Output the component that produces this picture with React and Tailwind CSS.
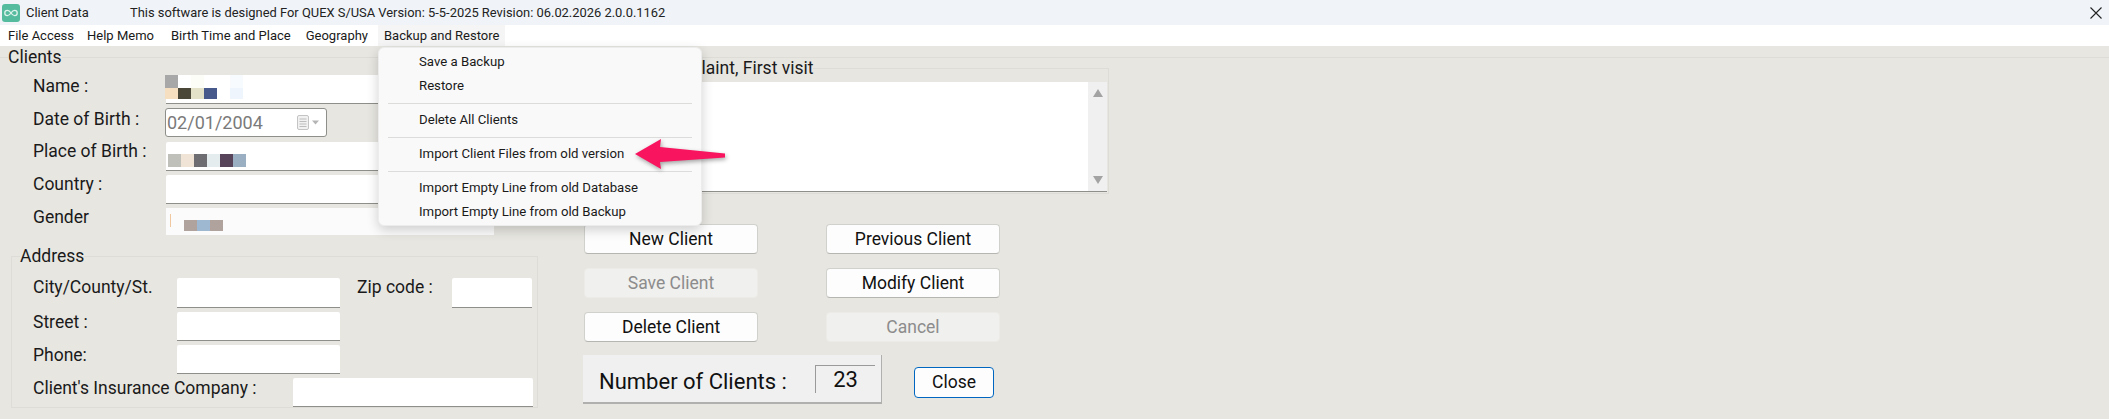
const Blocks = ({ colors, className = "" }) => (
  <div className={`flex ${className}`}>
    {colors.map((c, i) => (
      <div key={i} className="w-[13px] h-full" style={{ background: c }} />
    ))}
  </div>
);

const Input = ({ className = "", children }) => (
  <div className={`bg-white border-b border-[#8e8e8a] rounded-t-[2px] ${className}`}>{children}</div>
);

const Row = ({ label, children, mb = "mb-[4px]", lift = "-mt-[8px]" }) => (
  <div className={`flex items-center h-[29px] ${mb}`}>
    <span className={`w-[133px] text-[17.5px] leading-[22px] text-[#1a1a1a] ${lift}`}>{label}</span>
    {children}
  </div>
);

const Btn = ({ children, disabled }) => (
  <button
    className={
      disabled
        ? "w-[174px] h-[30px] rounded-[4px] bg-[#f0f0ee] text-[#8c8c8c] text-[17.5px] leading-[26px] border border-[#ecebe7]"
        : "w-[174px] h-[30px] rounded-[4px] bg-[#fdfdfd] text-[#111] text-[17.5px] leading-[26px] border border-[#d0d0cc] border-b-[#b5b5b1]"
    }
  >
    {children}
  </button>
);

const AddrInput = ({ w, h = "h-[29px]" }) => <Input className={`${h} ${w}`} />;

const Lbl = ({ w, className = "-mt-[10px]", children }) => (
  <span className={`${w} text-[17.5px] leading-[22px] text-[#1a1a1a] ${className}`}>{children}</span>
);

const MenuItem = ({ children }) => (
  <div className="h-[24px] pl-[40px] flex items-center text-[13.2px] text-[#1a1a1a] whitespace-nowrap">{children}</div>
);
const Sep = () => <div className="mx-[9px] my-[4.5px] h-px bg-[#dcdcda]" />;

export default function App() {
  return (
    <div
      className="relative w-[2109px] h-[419px] overflow-hidden bg-[#e7e6e1] text-[#111]"
      style={{ fontFamily: "Roboto, 'Noto Sans', sans-serif" }}
    >
      {/* Title bar */}
      <div className="h-[25px] flex items-center bg-[#f0f4f9]">
        <svg width="18" height="18" viewBox="0 0 18 18" className="ml-[2px]">
          <rect width="18" height="18" rx="3" fill="#55bb9f" />
          <path
            d="M9 9c-1.2-1.8-2.3-2.6-3.6-2.6a2.6 2.6 0 0 0 0 5.2C6.700 11.600 7.800 10.800 9 9c1.200-1.800 2.300-2.600 3.600-2.600a2.600 2.600 0 0 1 0 5.200C11.300 11.600 10.200 10.800 9 9z"
            fill="none"
            stroke="#dff3ec"
            strokeWidth="1.300"
          />
        </svg>
        <span className="ml-[6px] w-[104px] text-[12.9px] text-[#222]">Client Data</span>
        <span className="text-[12.9px] text-[#222] whitespace-nowrap">
          This software is designed For QUEX S/USA Version: 5-5-2025 Revision: 06.02.2026 2.0.0.1162
        </span>
        <svg width="14" height="14" viewBox="0 0 14 14" className="ml-auto mr-[6px]">
          <path d="M1.500 1.500l11 11M12.500 1.500l-11 11" stroke="#222" strokeWidth="1.100" fill="none" />
        </svg>
      </div>

      {/* Menu bar */}
      <div className="h-[21px] bg-white flex items-center text-[13px] text-[#1a1a1a] pl-[2px]">
        <span className="px-[6px] mr-[1px]">File Access</span>
        <span className="px-[6px] mr-[5px]">Help Memo</span>
        <span className="px-[6px] mr-[3px]">Birth Time and Place</span>
        <span className="px-[6px] mr-[4px]">Geography</span>
        <span className="px-[6px] h-full flex items-center bg-[#f5f5f5]">Backup and Restore</span>
      </div>

      {/* Clients group */}
      <fieldset className="border-t border-[#dddcd7]">
        <legend className="ml-[8px] text-[17.5px] leading-[22px] text-[#1a1a1a]">Clients</legend>
        <div className="flex">
          {/* Left column */}
          <div className="w-[570px] shrink-0 pt-[7px]">
            <div className="pl-[33px]">
              <Row label="Name :">
                <Input className="w-[328px] h-[29px] relative">
                  <Blocks colors={["#a8a8a8", "#ffffff", "#fdfdf8", "#ffffff", "#ffffff", "#f8fbfe"]} className="h-[13px] -ml-[1px]" />
                  <Blocks colors={["#f5dfc0", "#4a4638", "#e3e2c8", "#46598a", "#ffffff", "#eef5fc"]} className="h-[11px] -ml-[1px]" />
                </Input>
              </Row>
              <Row label="Date of Birth :" mb="mb-[5px]">
                <div className="w-[162px] h-[29px] -ml-[1px] bg-white border border-[#8e8e8a] rounded-[3px] flex items-center pl-[1px]">
                  <span className="text-[18px] text-[#7a7a7a]">02/01/2004</span>
                  <svg width="24" height="15" viewBox="0 0 24 15" className="ml-[34px]">
                    <rect x="0.500" y="0.500" width="11" height="14" rx="1.500" fill="#f1f1f1" stroke="#c4c4c4" />
                    <path d="M2.500 4h7M2.500 6.500h7M2.500 9h7M2.500 11.500h7" stroke="#bdbdbd" strokeWidth="1" />
                    <path d="M15 5.500h7l-3.500 4z" fill="#b5b5b5" />
                  </svg>
                </div>
              </Row>
              <Row label="Place of Birth :" lift="-mt-[11px]">
                <Input className="w-[328px] h-[29px] pt-[12px] pl-[2px]">
                  <Blocks colors={["#c0c0bb", "#f0e4d6", "#6e6e72", "#e4ecee", "#57445a", "#9ab0c2"]} className="h-[13px]" />
                </Input>
              </Row>
              <Row label="Country :" lift="-mt-[11px]">
                <Input className="w-[328px] h-[29px]" />
              </Row>
              <Row label="Gender" lift="-mt-[11px]" mb="mb-0">
                <div className="w-[328px] h-[27px] bg-[#fbfbfb] relative pt-[12px] pl-[18px] self-start">
                  <Blocks colors={["#b0a29c", "#9fb8d2", "#b0a29c"]} className="h-[11px]" />
                  <div className="absolute left-[4px] top-[6px] w-px h-[13px] bg-[#f0c8a0]" />
                </div>
              </Row>
            </div>

            {/* Address group */}
            <fieldset className="ml-[11px] w-[527px] h-[163px] mt-[8px] border border-[#dddcd7]">
              <legend className="ml-[8px] text-[17.5px] leading-[22px] text-[#1a1a1a]">Address</legend>
              <div className="pl-[21px] pt-[11px]">
                <div className="flex items-center mb-[4px]">
                  <Lbl w="w-[144px]" className="-mt-[12px]">City/County/St.</Lbl>
                  <AddrInput w="w-[163px]" h="h-[30px]" />
                  <Lbl w="w-[95px]" className="ml-[17px] -mt-[12px]">Zip code :</Lbl>
                  <AddrInput w="w-[80px]" h="h-[30px]" />
                </div>
                <div className="flex items-center mb-[4px]">
                  <Lbl w="w-[144px]">Street :</Lbl>
                  <AddrInput w="w-[163px]" />
                </div>
                <div className="flex items-center mb-[4px]">
                  <Lbl w="w-[144px]">Phone:</Lbl>
                  <AddrInput w="w-[163px]" />
                </div>
                <div className="flex items-center">
                  <Lbl w="w-[260px]">Client's Insurance Company :</Lbl>
                  <AddrInput w="w-[240px]" />
                </div>
              </div>
            </fieldset>
          </div>

          {/* Right column */}
          <div className="w-[539px] shrink-0">
            <fieldset className="w-[539px] h-[137px] border border-[#dddcd7] -mt-[11px]">
              <legend className="ml-[39px] text-[17.5px] leading-[22px] text-[#1a1a1a]">Chief Complaint, First visit</legend>
              <div className="ml-[2px] mr-[1px] h-[110px] mt-[3px] bg-white border-b border-[#8e8e8a] flex justify-end">
                <div className="w-[19px] h-full bg-[#f0f0f0] flex flex-col items-center justify-between py-[7px]">
                  <svg width="10" height="8" viewBox="0 0 10 8"><path d="M5 0l5 8H0z" fill="#a3a3a3" /></svg>
                  <svg width="10" height="8" viewBox="0 0 10 8"><path d="M5 8L0 0h10z" fill="#a3a3a3" /></svg>
                </div>
              </div>
            </fieldset>

            <div className="pl-[14px] pt-[30px]">
              <div className="grid grid-cols-[174px_173px] gap-x-[68px] gap-y-[14px]">
                <Btn>New Client</Btn>
                <Btn>Previous Client</Btn>
                <Btn disabled>Save Client</Btn>
                <Btn>Modify Client</Btn>
                <Btn>Delete Client</Btn>
                <Btn disabled>Cancel</Btn>
              </div>
              <div className="flex items-center mt-[13px] -ml-[1px]">
                <div className="w-[299px] h-[49px] bg-[#f0f0f0] border-r border-b-2 border-[#b0b0ae] flex items-center pl-[16px] pr-[6px]">
                  <span className="text-[22px] text-[#111] whitespace-nowrap mt-[5px]">Number of Clients :</span>
                  <div className="ml-auto w-[60px] h-[28px] border-t border-l border-[#9a9a9a] flex items-center justify-center text-[22px] text-[#111]">23</div>
                </div>
                <button className="ml-[32px] mt-[6px] w-[80px] h-[31px] rounded-[4px] bg-[#fdfdfd] border border-[#0067c0] text-[17.5px] text-[#111]">Close</button>
              </div>
            </div>
          </div>
        </div>
      </fieldset>

      {/* Dropdown menu */}
      <div className="absolute left-[378px] top-[47px] w-[324px] h-[179px] rounded-[6px] bg-[#f9f9f9] border border-[#ececec] shadow-[0_4px_12px_rgba(0,0,0,0.18)] pt-[2px]">
        <MenuItem>Save a Backup</MenuItem>
        <MenuItem>Restore</MenuItem>
        <Sep />
        <MenuItem>Delete All Clients</MenuItem>
        <Sep />
        <MenuItem>Import Client Files from old version</MenuItem>
        <Sep />
        <MenuItem>Import Empty Line from old Database</MenuItem>
        <MenuItem>Import Empty Line from old Backup</MenuItem>
      </div>

      {/* Arrow annotation */}
      <svg width="100" height="40" viewBox="0 0 100 40" className="absolute left-[632px] top-[136px]" style={{ filter: "drop-shadow(1px 2px 2px rgba(0,0,0,0.35))" }}>
        <path d="M3 18L29 3l-1 8 65 6.500v4L28 26l1 7z" fill="#f9145f" />
      </svg>
    </div>
  );
}
